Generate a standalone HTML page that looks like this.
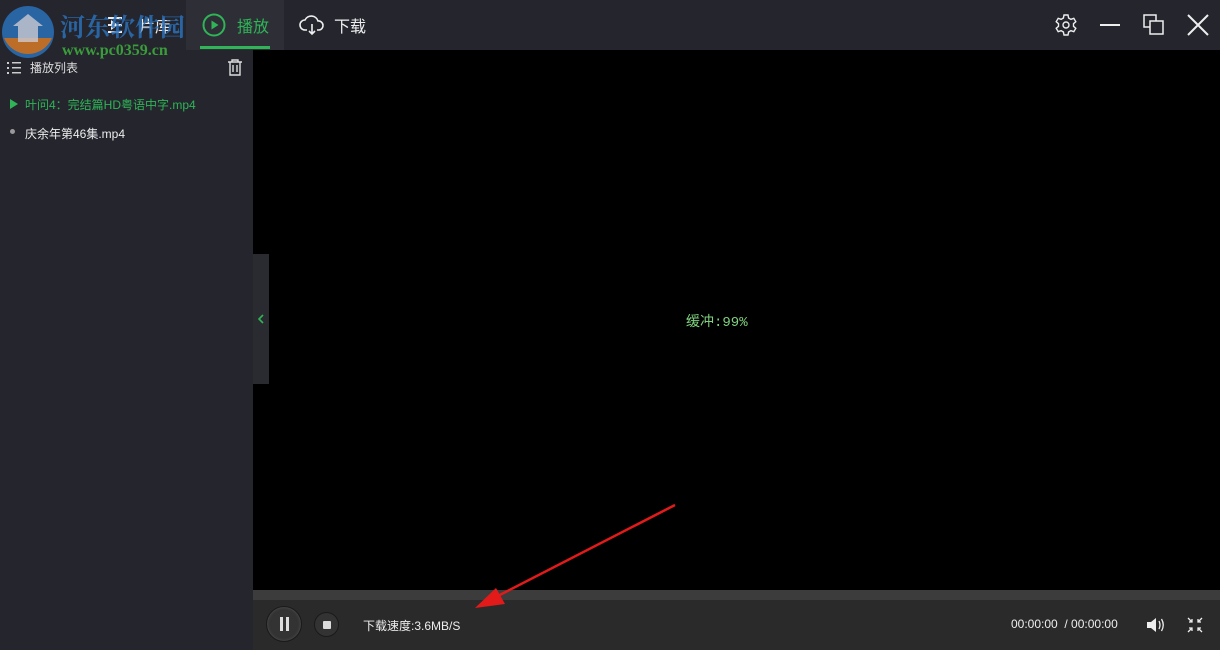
<!DOCTYPE html>
<html><head><meta charset="utf-8"><style>
*{margin:0;padding:0;box-sizing:border-box}
body{width:1220px;height:650px;overflow:hidden;background:#000;font-family:"Liberation Sans","Noto Sans CJK SC",sans-serif;position:relative}
.top{position:absolute;left:0;top:0;width:1220px;height:50px;background:#24252d}
.tab{position:absolute;top:0;height:50px;display:flex;align-items:center;color:#eee;font-size:16px}
.side{position:absolute;left:0;top:50px;width:253px;height:600px;background:#24252d}
.abs{position:absolute}
</style></head><body>
<div class="top"></div>
<div class="abs" style="left:186px;top:0;width:98px;height:50px;background:#2d2e36"></div>
<div class="abs" style="left:200px;top:46px;width:70px;height:3px;background:#2fb457"></div>
<div class="tab" style="left:105px"><svg width="20" height="20" viewBox="0 0 20 20"><path d="M3 3h14M3 10h14M3 17h14" stroke="#eee" stroke-width="2"/><path d="M6 5l7 5-7 5z" fill="#eee"/></svg><span style="margin-left:14px">片库</span></div>
<div class="tab" style="left:202px;color:#2fb457"><svg width="24" height="24" viewBox="0 0 24 24"><circle cx="12" cy="12" r="10.5" fill="none" stroke="#2fb457" stroke-width="2"/><path d="M9.5 7.5l7 4.5-7 4.5z" fill="#2fb457"/></svg><span style="margin-left:11px">播放</span></div>
<div class="tab" style="left:299px"><svg width="26" height="22" viewBox="0 0 26 22"><path d="M8 16H6a5 5 0 0 1 0-10 7 7 0 0 1 13 1 4.5 4.5 0 0 1 1 9h-2" fill="none" stroke="#eee" stroke-width="1.6"/><path d="M13 10v10M10 17l3 3 3-3" fill="none" stroke="#eee" stroke-width="1.6"/></svg><span style="margin-left:9px">下载</span></div>
<svg class="abs" style="left:1054px;top:13px" width="24" height="24" viewBox="0 0 24 24"><path d="M10 2h4l.6 3 2.3 1.3 2.9-1 2 3.4-2.3 2v2.6l2.3 2-2 3.4-2.9-1-2.3 1.3-.6 3h-4l-.6-3-2.3-1.3-2.9 1-2-3.4 2.3-2v-2.6l-2.3-2 2-3.4 2.9 1L9.4 5z" fill="none" stroke="#eee" stroke-width="1.4"/><circle cx="12" cy="12" r="3" fill="none" stroke="#eee" stroke-width="1.4"/></svg>
<div class="abs" style="left:1100px;top:24px;width:20px;height:2px;background:#eee"></div>
<svg class="abs" style="left:1143px;top:14px" width="22" height="22" viewBox="0 0 22 22"><rect x="1" y="1" width="12" height="12" fill="none" stroke="#eee" stroke-width="1.5"/><rect x="7" y="7" width="13" height="13" fill="#24252d" stroke="#eee" stroke-width="1.5"/></svg>
<svg class="abs" style="left:1187px;top:14px" width="22" height="22" viewBox="0 0 22 22"><path d="M1 1l20 20M21 1L1 21" stroke="#eee" stroke-width="2"/></svg>
<div class="side">
<svg class="abs" style="left:7px;top:11px" width="14" height="14" viewBox="0 0 14 14"><g fill="#ccc"><rect x="0" y="1" width="2" height="2"/><rect x="0" y="6" width="2" height="2"/><rect x="0" y="11" width="2" height="2"/><rect x="5" y="1" width="9" height="1.5"/><rect x="5" y="6" width="9" height="1.5"/><rect x="5" y="11" width="9" height="1.5"/></g></svg>
<div class="abs" style="left:30px;top:9px;font-size:12px;color:#ddd">播放列表</div>
<svg class="abs" style="left:227px;top:9px" width="16" height="17" viewBox="0 0 16 17"><path d="M1 3h14M5 3V1h6v2M3 3v13h10V3M6 6v7M10 6v7" fill="none" stroke="#ddd" stroke-width="1.4"/></svg>
<svg class="abs" style="left:10px;top:49px" width="8" height="10" viewBox="0 0 8 10"><path d="M0 0l8 5-8 5z" fill="#2fb457"/></svg>
<div class="abs" style="left:25px;top:46px;font-size:12px;color:#2fb457">叶问4：完结篇HD粤语中字.mp4</div>
<div class="abs" style="left:10px;top:79px;width:5px;height:5px;border-radius:50%;background:#999"></div>
<div class="abs" style="left:25px;top:75px;font-size:12px;color:#eee">庆余年第46集.mp4</div>
</div>
<div class="abs" style="left:253px;top:254px;width:16px;height:130px;background:#2a2b30"></div>
<svg class="abs" style="left:257px;top:314px" width="8" height="10" viewBox="0 0 8 10"><path d="M6 1L2 5l4 4" fill="none" stroke="#2fb457" stroke-width="1.6"/></svg>
<div class="abs" style="left:686px;top:311px;font-size:14px;color:#7fd07f;font-family:'Liberation Mono','Noto Sans CJK SC',monospace">缓冲:99%</div>
<div class="abs" style="left:253px;top:590px;width:967px;height:10px;background:#3c3c3c"></div>
<div class="abs" style="left:253px;top:600px;width:967px;height:50px;background:#2a2a2a"></div>
<div class="abs" style="left:266px;top:606px;width:36px;height:36px;border-radius:50%;background:#333;border:1px solid #1a1a1a;box-shadow:inset 0 0 3px #555"></div>
<div class="abs" style="left:280px;top:617px;width:3px;height:14px;background:#ddd"></div>
<div class="abs" style="left:286px;top:617px;width:3px;height:14px;background:#ddd"></div>
<div class="abs" style="left:314px;top:612px;width:25px;height:25px;border-radius:50%;background:#333;border:1px solid #1a1a1a"></div>
<div class="abs" style="left:323px;top:621px;width:8px;height:8px;border-radius:1px;background:#ddd"></div>
<div class="abs" style="left:363px;top:617px;font-size:12px;color:#eee">下载速度:3.6MB/S</div>
<div class="abs" style="left:1011px;top:617px;font-size:12px;color:#eee">00:00:00 &nbsp;/ 00:00:00</div>
<svg class="abs" style="left:1146px;top:617px" width="20" height="16" viewBox="0 0 20 16"><path d="M1 5h4l5-4v14l-5-4H1z" fill="#eee"/><path d="M13 4q2 4 0 8M15.5 2q3.5 6 0 12" fill="none" stroke="#eee" stroke-width="1.3"/></svg>
<svg class="abs" style="left:1187px;top:617px" width="16" height="16" viewBox="0 0 16 16"><path d="M1 1l4 4M15 1l-4 4M1 15l4-4M15 15l-4-4M5 2v3H2M11 2v3h3M5 14v-3H2M11 14v-3h3" fill="none" stroke="#eee" stroke-width="1.3"/></svg>
<svg class="abs" style="left:470px;top:500px" width="210" height="110" viewBox="0 0 210 110"><path d="M205 5L20 100" stroke="#e21a1a" stroke-width="2.5"/><path d="M5 108l30-4-9-16z" fill="#e21a1a"/></svg>
<svg class="abs" style="left:0;top:4px" width="56" height="56" viewBox="0 0 56 56" opacity="0.85"><circle cx="28" cy="28" r="26" fill="#2a6fb8"/><path d="M4 34a26 26 0 0 0 48 0z" fill="#d77a28"/><path d="M18 38V22h-5l15-12 15 12h-5v16z" fill="#e8e8ee" opacity=".8"/></svg>
<div class="abs" style="left:60px;top:8px;font-size:25px;font-weight:bold;color:#2a6fb8;opacity:.85;font-family:'Liberation Serif','Noto Serif CJK SC',serif">河东软件园</div>
<div class="abs" style="left:62px;top:42px;font-size:16px;font-weight:bold;color:#3a9c3a;font-family:'Liberation Serif',serif">www.pc0359.cn</div>
</body></html>
